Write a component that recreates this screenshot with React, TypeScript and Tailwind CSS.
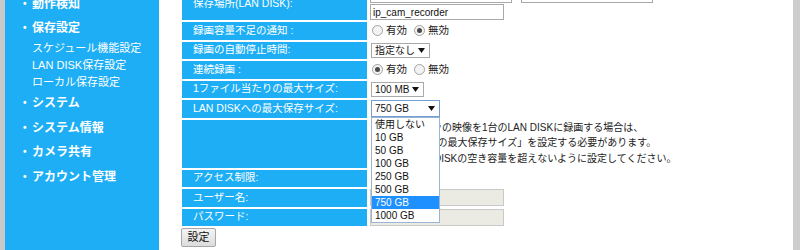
import React from "react";

const SIDE_MAIN = "flex items-center h-[24.5px] pl-[18px] text-[12px] font-bold text-white";
const SIDE_SUB = "flex items-center h-[17px] pl-[27px] text-[11px] text-white";

function Bullet() {
  return <span className="w-[9px] text-[10px] leading-none">•</span>;
}

function Radio({ checked }: { checked?: boolean }) {
  return (
    <span className="flex items-center justify-center w-[11px] h-[11px] rounded-full border border-[#a3a3a3] bg-[#f3f3f3]">
      {checked && <span className="w-[5px] h-[5px] rounded-full bg-[#4a4a4a]" />}
    </span>
  );
}

function RadioPair({ on }: { on: boolean }) {
  return (
    <div className="flex items-center h-full pl-[3px] text-[10.5px] text-[#222]">
      <Radio checked={on} />
      <span className="ml-[3px] mr-[7px]">有効</span>
      <Radio checked={!on} />
      <span className="ml-[3px]">無効</span>
    </div>
  );
}

function Arrow() {
  return (
    <svg width="7" height="5" viewBox="0 0 7 5" className="shrink-0">
      <path d="M0 0h7L3.5 5z" fill="#111" />
    </svg>
  );
}

function Select({ value, width, focused }: { value: string; width: string; focused?: boolean }) {
  return (
    <div
      className={`flex items-center justify-between ${width} ${
        focused ? "h-[17px] border-[#6f9fd6]" : "h-[15px] border-[#a9a9a9]"
      } border bg-white pl-[3px] pr-[4px] text-[10px] text-[#111]`}
    >
      <span>{value}</span>
      <Arrow />
    </div>
  );
}

const sizes = ["使用しない", "10 GB", "50 GB", "100 GB", "250 GB", "500 GB", "750 GB", "1000 GB"];

function Label({ children, className = "h-[17.5px]" }: { children?: React.ReactNode; className?: string }) {
  return (
    <div className={`flex items-center ${className} bg-[#1daef5] pl-[11px] text-[10.5px] text-white`}>
      {children}
    </div>
  );
}

export default function App() {
  return (
    <div className="relative flex w-[800px] h-[250px] overflow-hidden bg-white font-['Liberation_Sans','Noto_Sans_CJK_JP',sans-serif]">
      <div className="w-[5px] bg-[#c9c9c9]" />

      {/* Sidebar */}
      <div className="w-[154px] bg-[#1daef5]">
        <div className="-mt-[8px] flex flex-col">
          <div className={`${SIDE_MAIN} h-[24px]`}>
            <Bullet />
            動作検知
          </div>
          <div className={`${SIDE_MAIN} h-[24px] text-[#f8ff2e]`}>
            <Bullet />
            保存設定
          </div>
          <div className={SIDE_SUB}>スケジュール機能設定</div>
          <div className={`${SIDE_SUB} text-[#e4ff55]`}>LAN DISK保存設定</div>
          <div className={SIDE_SUB}>ローカル保存設定</div>
          <div className={SIDE_MAIN}>
            <Bullet />
            システム
          </div>
          <div className={SIDE_MAIN}>
            <Bullet />
            システム情報
          </div>
          <div className={SIDE_MAIN}>
            <Bullet />
            カメラ共有
          </div>
          <div className={SIDE_MAIN}>
            <Bullet />
            アカウント管理
          </div>
        </div>
      </div>

      {/* Form */}
      <div className="flex-1 pl-[23px]">
        <div className="-mt-[12px] grid grid-cols-[185px_1fr] gap-[2px]">
          <Label className="h-[32px]">保存場所(LAN DISK):</Label>
          <div className="flex flex-col gap-[1px] pl-[1px]">
            <div className="flex gap-[9px] h-[15px]">
              <div className="w-[142px] border border-[#a9a9a9] bg-white" />
              <div className="w-[132px] border border-[#a9a9a9] bg-white" />
            </div>
            <div className="flex items-center w-[134px] h-[16px] border border-[#a9a9a9] bg-white pl-[2px] text-[10px] text-[#111]">
              ip_cam_recorder
            </div>
          </div>

          <Label>録画容量不足の通知 :</Label>
          <RadioPair on={false} />

          <Label>録画の自動停止時間:</Label>
          <div className="flex items-center pl-[2px]">
            <Select value="指定なし" width="w-[59px]" />
          </div>

          <Label>連続録画 :</Label>
          <RadioPair on={true} />

          <Label>1ファイル当たりの最大サイズ:</Label>
          <div className="flex items-center pl-[2px]">
            <Select value="100 MB" width="w-[53px]" />
          </div>

          <Label>LAN DISKへの最大保存サイズ:</Label>
          <div className="flex items-center pl-[2px]">
            <div className="relative z-10">
              <Select value="750 GB" width="w-[69px]" focused />
              {/* open dropdown list */}
              <div className="absolute left-0 top-full w-[69px] border border-[#9ab4d4] bg-white text-[10px] text-[#111]">
                {sizes.map((s) => (
                  <div
                    key={s}
                    className={`flex items-center h-[13px] pl-[3px] ${s === "750 GB" ? "bg-[#1e90ff] text-white" : ""}`}
                  >
                    {s}
                  </div>
                ))}
              </div>
            </div>
          </div>

          <Label className="h-[48px]" />
          <div className="pl-[3px] text-[10px] leading-[15.5px] text-[#222]">
            複数台のカメラの映像を1台のLAN DISKに録画する場合は、
            <br />
            「LAN DISKへの最大保存サイズ」を設定する必要があります。
            <br />
            サイズはLAN DISKの空き容量を超えないように設定してください。
          </div>

          <Label>アクセス制限:</Label>
          <div />

          <Label>ユーザー名:</Label>
          <div className="flex items-center pl-[1px]">
            <div className="w-[134px] h-[17px] border border-[#c9c9c9] bg-[#ebebe4]" />
          </div>

          <Label>パスワード:</Label>
          <div className="flex items-center pl-[1px]">
            <div className="w-[134px] h-[17px] border border-[#c9c9c9] bg-[#ebebe4]" />
          </div>
        </div>

        <button className="mt-[2px] -ml-px flex items-center justify-center w-[35px] h-[19px] rounded-[2px] border border-[#a7a7a7] bg-gradient-to-b from-[#f4f4f4] to-[#dcdcdc] text-[11px] text-[#111]">
          設定
        </button>
      </div>

      <div className="w-[7px] bg-[#cdcdcd]" />
    </div>
  );
}
